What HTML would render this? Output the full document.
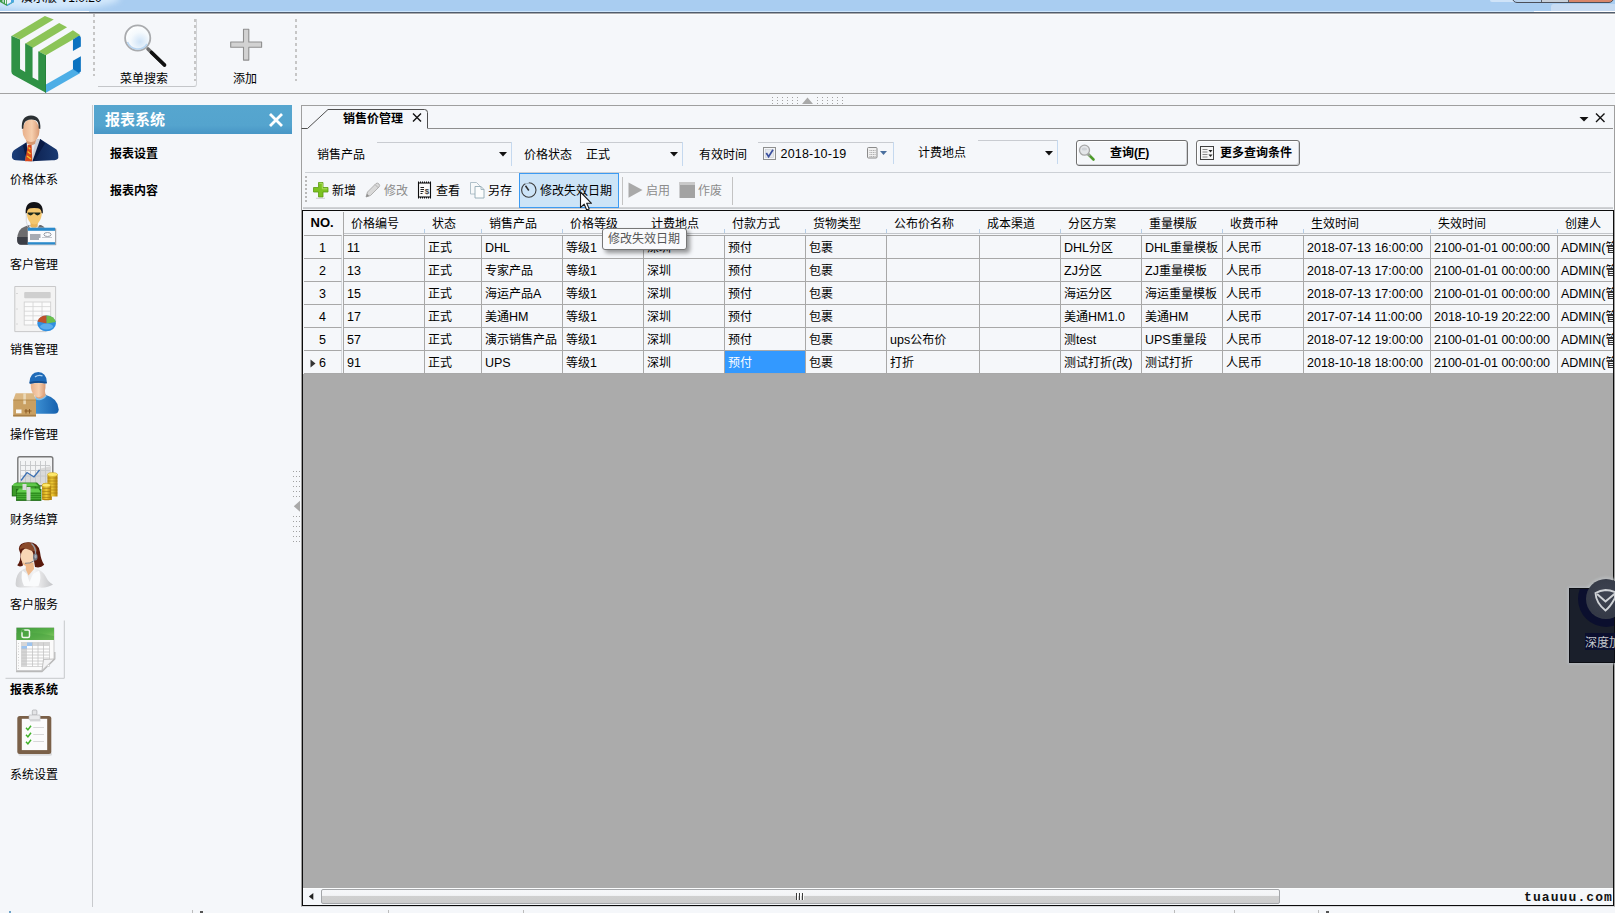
<!DOCTYPE html>
<html lang="zh-CN">
<head>
<meta charset="utf-8">
<title>销售价管理</title>
<style>
*{box-sizing:border-box;margin:0;padding:0}
html,body{width:1615px;height:913px;overflow:hidden;background:#f5f7fa}
body{position:relative;font-family:"Liberation Sans","Noto Sans CJK SC",sans-serif;font-size:12px;color:#000;line-height:16px}
.abs{position:absolute}
.t{position:absolute;white-space:nowrap;line-height:18px;height:18px}
.b{font-weight:bold}
.g{color:#8c8c8c}
/* title bar */
#title{left:0;top:0;width:1615px;height:12px;background:#a9cdf1;overflow:hidden}
#titleline{left:0;top:11px;width:1615px;height:4px;background:linear-gradient(#cde5fa 0 1px,#505d6e 1px 2px,#a9aaac 2px 3px,#fcfdfe 3px 4px)}
/* top toolbar */
#tbline{left:0;top:93px;width:1615px;height:1px;background:#a3a3a3}
.vdot{position:absolute;width:2px;background:repeating-linear-gradient(#c6c6c6 0 3px,transparent 3px 6px)}
/* sidebar */
#sbline{left:92px;top:105px;width:1px;height:802px;background:#c8cacd}
.sblab{position:absolute;left:0;width:68px;text-align:center;font-size:12px;line-height:16px;white-space:nowrap}
/* panel */
#phead{left:94px;top:105px;width:198px;height:29px;background:linear-gradient(#56a6cf,#54a4ce 70%,#4896c6)}
/* main */
#mainbox{left:301px;top:105px;width:1314px;height:802px;border:1px solid #9f9f9f;border-bottom-color:#d9dadc}
#tabline{left:428px;top:128px;width:1185px;height:1px;background:#8e8e8e}
.hl{position:absolute;height:1px}
.vl{position:absolute;width:1px}
/* grid */
#grid{left:302px;top:210px;width:1312px;height:696px;background:#ababab;border:1px solid #0c0c0c;overflow:hidden}
#gin{position:absolute;left:1px;top:1px;width:1309px;height:693px}
#ghead{position:absolute;left:0;top:0;width:1400px;height:23px;background:#f5f7fa}
#ghead:after{content:"";position:absolute;left:40px;top:21px;width:1360px;height:1px;background:#c3c6ca}
.hc{position:absolute;top:0;height:22px;line-height:24px;padding-left:8px;white-space:nowrap}
.hc i{position:absolute;right:-1px;bottom:1px;width:1px;height:4px;background:#b5cde6}
.row{position:absolute;left:0;width:1400px;height:23px;background:#f5f7fa}
.c{position:absolute;top:0;height:23px;line-height:24px;padding-left:3px;border-left:1px solid #a8a8a8;border-top:1px solid #a8a8a8;white-space:nowrap;overflow:hidden}
.n{position:absolute;top:0;left:0;width:38px;height:23px;line-height:24px;border-top:1px solid #a8a8a8;border-right:1px solid #d9dce0;text-align:center}
.l{font-size:12.5px}
</style>
</head>
<body>
<!-- TITLE BAR -->
<div id="title" class="abs">
<div class="abs" style="left:-30px;top:-14px;width:150px;height:24px;border-radius:50%;background:#d3e8fb;filter:blur(3px)"></div>
<div class="abs" style="left:1551px;top:4px;width:64px;height:7px;background:#c8dcf3;border-radius:3px 0 0 0"></div>
<div class="abs" style="left:1490px;top:-2px;width:26px;height:4px;background:#cfe3f8;border-radius:2px"></div>
<svg class="abs" style="left:-2px;top:-11px" width="18" height="18" viewBox="0 0 18 18"><path d="M2 5l7-4 7 4v8l-7 4-7-4z" fill="#3a9a47"/><path d="M9 9l7-4v8l-7 4z" fill="#4aa8e0"/><path d="M9 10.5l4-2.3v5l-4 2.3z" fill="#eef3f8"/><path d="M4.5 7v6l1.2.7V7.7zM7 8.4v6l1.2.7v-6z" fill="#eef3f8"/></svg>
<div class="t" style="left:21px;top:-10px;font-size:12px;line-height:16px;color:#000">演示版 V1.0.20</div>
<div class="abs" style="left:1512px;top:-18px;width:102px;height:21px;border:1px solid #4a4f5a;border-radius:0 0 5px 5px;background:linear-gradient(90deg,#b9d3ee 0 28px,#5b6069 28px 29px,#c8d0da 29px 55px,#5b6069 55px 56px,#d8866a 56px)"></div>
</div>
<div id="titleline" class="abs"></div>
<div class="abs" style="left:0;top:11px;width:89px;height:1px;background:#fff"></div>
<div class="abs" style="left:1534px;top:11px;width:81px;height:1px;background:#fff"></div>
<!-- TOP TOOLBAR -->
<div id="tbline" class="abs"></div>
<svg class="abs" style="left:0;top:10px" width="100" height="90" viewBox="0 0 1014 913">
<polygon points="120,262 455,62 545,97 205,300" fill="#8cc457"/>
<polygon points="258,340 600,132 680,175 330,385" fill="#8cc457"/>
<polygon points="392,420 740,205 815,255 465,460" fill="#8cc457"/>
<path d="M115,262 L203,300 L203,598 L255,628 L255,338 L330,380 L330,685 L388,715 L388,418 L465,458 L465,840 L135,660 Q115,648 115,625 Z" fill="#2f9145"/>
<polygon points="465,755 740,598 815,640 465,840" fill="#4daee6"/>
<path d="M740,300 L800,262 Q820,262 820,290 L820,370 L740,415 Z" fill="#0a72c0"/>
<path d="M740,515 L820,470 L820,625 L800,640 L740,600 Z" fill="#0a72c0"/>
<rect x="458" y="458" width="8" height="382" fill="#1f7a33"/>
</svg>
<div class="vdot" style="left:93px;top:14px;height:62px"></div>
<div class="vdot" style="left:194px;top:19px;height:62px"></div>
<div class="vdot" style="left:295px;top:19px;height:62px"></div>
<div class="abs" style="left:98px;top:19px;width:99px;height:68px;border-right:1px solid #d2d4d7;border-bottom:1px solid #c4c6c9;border-radius:0 0 3px 0"></div>
<svg class="abs" style="left:118px;top:20px" width="54" height="50" viewBox="0 0 54 50">
<defs><radialGradient id="mg" cx="0.6" cy="0.65" r="0.7"><stop offset="0" stop-color="#cfe3f7"/><stop offset="0.55" stop-color="#f4f9fd"/><stop offset="1" stop-color="#ffffff"/></radialGradient></defs>
<line x1="30" y1="29" x2="46.500" y2="45" stroke="#6d6d6d" stroke-width="3.600" stroke-linecap="round"/>
<line x1="33.500" y1="32.500" x2="46.500" y2="45" stroke="#111" stroke-width="3.600" stroke-linecap="round"/>
<circle cx="19.700" cy="18" r="12.600" fill="url(#mg)" stroke="#a9abae" stroke-width="1.800"/>
<path d="M9.500,22 A11,11 0 0 0 29,24" fill="none" stroke="#b9d6f2" stroke-width="1.600"/>
</svg>
<div class="t" style="left:104px;top:70px;width:80px;text-align:center">菜单搜索</div>
<svg class="abs" style="left:228px;top:28px" width="36" height="34" viewBox="0 0 36 34">
<path d="M15.500,2.500h5.300v12.800h12.800v5.300h-12.800v12.800h-5.300v-12.800h-12.800v-5.300h12.800z" transform="translate(0,-1.300)" fill="#d2d2d2" stroke="#8f8f8f" stroke-width="1.100" stroke-linejoin="round"/>
</svg>
<div class="t" style="left:205px;top:70px;width:80px;text-align:center">添加</div>
<!-- top splitter -->
<svg class="abs" style="left:770px;top:96px" width="80" height="9" viewBox="770 96 80 9"><g fill="#a2a2a2"><rect x="772" y="97" width="1" height="1"/><rect x="772" y="100" width="1" height="1"/><rect x="772" y="103" width="1" height="1"/><rect x="777" y="97" width="1" height="1"/><rect x="777" y="100" width="1" height="1"/><rect x="777" y="103" width="1" height="1"/><rect x="782" y="97" width="1" height="1"/><rect x="782" y="100" width="1" height="1"/><rect x="782" y="103" width="1" height="1"/><rect x="787" y="97" width="1" height="1"/><rect x="787" y="100" width="1" height="1"/><rect x="787" y="103" width="1" height="1"/><rect x="792" y="97" width="1" height="1"/><rect x="792" y="100" width="1" height="1"/><rect x="792" y="103" width="1" height="1"/><rect x="797" y="97" width="1" height="1"/><rect x="797" y="100" width="1" height="1"/><rect x="797" y="103" width="1" height="1"/><rect x="817" y="97" width="1" height="1"/><rect x="817" y="100" width="1" height="1"/><rect x="817" y="103" width="1" height="1"/><rect x="822" y="97" width="1" height="1"/><rect x="822" y="100" width="1" height="1"/><rect x="822" y="103" width="1" height="1"/><rect x="827" y="97" width="1" height="1"/><rect x="827" y="100" width="1" height="1"/><rect x="827" y="103" width="1" height="1"/><rect x="832" y="97" width="1" height="1"/><rect x="832" y="100" width="1" height="1"/><rect x="832" y="103" width="1" height="1"/><rect x="837" y="97" width="1" height="1"/><rect x="837" y="100" width="1" height="1"/><rect x="837" y="103" width="1" height="1"/><rect x="842" y="97" width="1" height="1"/><rect x="842" y="100" width="1" height="1"/><rect x="842" y="103" width="1" height="1"/></g><polygon points="807.500,97.600 813,103.900 802,103.900" fill="#a9a9a9"/></svg>
<!-- SIDEBAR -->
<div id="sbline" class="abs"></div>
<svg class="abs" style="left:0;top:105px" width="92" height="680" viewBox="0 105 92 680">
<defs>
<linearGradient id="skin" x1="0" x2="1"><stop offset="0" stop-color="#e9b08a"/><stop offset="0.55" stop-color="#f6cfae"/><stop offset="1" stop-color="#d99a74"/></linearGradient>
<linearGradient id="navy" x1="0" x2="1"><stop offset="0" stop-color="#1c3f7a"/><stop offset="0.5" stop-color="#0e2454"/><stop offset="1" stop-color="#1a3a72"/></linearGradient>
<linearGradient id="gsuit" x1="0" x2="1"><stop offset="0" stop-color="#8a8a8a"/><stop offset="1" stop-color="#5c5c5c"/></linearGradient>
<linearGradient id="bshirt" x1="0" x2="1"><stop offset="0" stop-color="#3f93d6"/><stop offset="1" stop-color="#1560ad"/></linearGradient>
<linearGradient id="boxg" x1="0" x2="1"><stop offset="0" stop-color="#cfa06a"/><stop offset="1" stop-color="#a87844"/></linearGradient>
<linearGradient id="gold" x1="0" x2="1"><stop offset="0" stop-color="#c2940c"/><stop offset="0.45" stop-color="#f0cc38"/><stop offset="1" stop-color="#b07f08"/></linearGradient>
<linearGradient id="grn" x1="0" y1="0" x2="1" y2="1"><stop offset="0" stop-color="#3f9a3c"/><stop offset="0.6" stop-color="#5bb24a"/><stop offset="1" stop-color="#8fce6a"/></linearGradient>
<linearGradient id="wshirt" x1="0" x2="1"><stop offset="0" stop-color="#cfd0d2"/><stop offset="0.5" stop-color="#f4f4f5"/><stop offset="1" stop-color="#c4c5c8"/></linearGradient>
</defs>
<!-- 1 businessman -->
<g>
<path d="M11.900,157 Q11.400,151.500 15,149.500 L26.500,142.300 L40.200,139 L56.500,149.500 Q58.600,152 58.300,158 Q57.500,160.300 52,160.300 L31,161.200 L16,160.300 Q12.200,160 11.900,157Z" fill="url(#navy)"/>
<path d="M26.500,142.300 L40.200,139 L39,146 L33,161 L25.500,161Z" fill="#e9e9ee"/>
<path d="M36,140 L40.200,139 L39.500,145 L33,161 L31,161Z" fill="#cfd0d8"/>
<path d="M40.200,139 L45,143.500 L34,161.200 L32.500,161Z" fill="#091a44"/>
<path d="M26.500,142.300 L23,146 L27,161 L28.500,161Z" fill="#091a44"/>
<path d="M27.800,145 L31.600,144.600 L32.200,161.200 L25,161.200Z" fill="#d9481c"/>
<path d="M28.600,147.500l1.800,1.800M27.600,151.500l3,2.500M27,156l4,3" stroke="#f6c52e" stroke-width="1.300"/>
<path d="M26,140 L36,140 L35,144 Q31,146.500 27,143.500Z" fill="#d89a72"/>
<ellipse cx="31" cy="130.800" rx="8.500" ry="11.300" fill="url(#skin)"/>
<path d="M21.900,129 Q20.800,115.600 31,115.500 Q41.200,115.800 40.300,129 L38.700,128.500 Q39,121.500 35.500,120.200 Q30,118.800 26.500,120.800 Q23.300,122.500 23.400,128.500Z" fill="#2b3033"/>
</g>
<!-- 2 customer mgmt -->
<g>
<path d="M17.200,240 Q17,229 25,226.500 L29,225 L41,225 Q46.800,227 46.800,236 L46.800,244.500 L21,244.500 Q17.200,244.500 17.200,240Z" fill="#6c6c6e"/>
<path d="M17.200,237 L46.800,237 L46.800,244.800 L21,244.800 Q17.200,244.500 17.200,240Z" fill="#3b3e46"/>
<path d="M28.500,225.500 L34,233 L39.500,225Z" fill="#f3f4f6"/>
<path d="M30.500,222 L38,222 L37.500,226.500 L34,230 L30.500,226.500Z" fill="#eab45a"/>
<path d="M26.700,212 Q26.700,206.500 34.300,206.500 Q41.900,206.500 41.900,212 Q41.900,218.500 38.500,222.500 Q34.300,226.500 30.100,222.500 Q26.700,218.500 26.700,212Z" fill="#f5c76e"/>
<path d="M25.700,213.500 Q24.800,202.200 34,201.900 Q43.500,202 42.800,213.500 L41.600,213 Q41.500,209 38,208.300 Q34,207.500 30.500,208.300 Q27,209 26.900,213Z" fill="#131316"/>
<path d="M27.600,212.400 h12.800 v1.200 q-1,1.800 -3,1.800 q-1.800,0 -2.800,-1.800 h-1.200 q-1,1.800 -2.800,1.800 q-2,0 -3,-1.800z" fill="#1f2a1c"/>
<path d="M26.300,214 Q25.500,222 27.800,227" stroke="#c9ccd2" stroke-width="0.700" fill="none"/>
<rect x="28.600" y="228.400" width="27.600" height="16.800" fill="#9b9da1"/>
<rect x="27.800" y="227.700" width="27.300" height="16.800" fill="#fafbfd"/>
<rect x="27.800" y="227.700" width="27.300" height="3.100" fill="#2b8acb"/>
<rect x="27.800" y="242.200" width="27.300" height="2.300" fill="#2b8acb"/>
<path d="M30,235h10.500M30,237h10.500M30,239h9" stroke="#8b919b" stroke-width="1.500"/>
<ellipse cx="47.500" cy="234.500" rx="3.600" ry="2" fill="none" stroke="#8d939d" stroke-width="0.900"/>
<path d="M42,237.500h10" stroke="#b5bac2" stroke-width="0.800"/>
</g>
<!-- 3 sales mgmt -->
<g>
<path d="M14.800,286.500 H55.600 V322 L46,331.600 H14.800Z" fill="#f3f3f3" stroke="#c4c4c4" stroke-width="0.900"/>
<rect x="24.200" y="292" width="26.500" height="6.300" rx="1" fill="#cfcfcf"/>
<rect x="24.200" y="302" width="26.500" height="23" fill="#fbfbfb" stroke="#cdcdcd" stroke-width="0.800"/>
<path d="M24.200,306.600h26.500M24.200,311.200h26.500M24.200,315.800h26.500M24.200,320.400h26.500M33,302v23M42,302v23" stroke="#d3d3d3" stroke-width="0.800"/>
<path d="M16.500,293.500h1M16.500,309h1M16.500,324h1" stroke="#bdbdbd" stroke-width="1"/>
<ellipse cx="46.600" cy="323.400" rx="9.300" ry="7.800" fill="#2f8fe0"/>
<path d="M46.600,323.400 L37.500,321.500 Q39.500,315.600 46.600,315.600Z" fill="#c0522a"/>
<path d="M46.600,323.400 L46.600,315.600 Q54,316 55.800,322Z" fill="#6cc04a"/>
<ellipse cx="46.600" cy="326.500" rx="6.500" ry="3" fill="#7cc2f4" opacity="0.600"/>
</g>
<!-- 4 operations -->
<g>
<path d="M34,413.700 L34,402 Q35,397 41,395.500 L46,395 Q58.300,398.500 58.700,409.500 Q58.700,413.700 54,413.700Z" fill="url(#bshirt)"/>
<path d="M35,399 Q40.500,402.500 46.500,396.500 L46,394 L36,394Z" fill="#7cc0ee"/>
<path d="M35.600,397 Q40.500,401 45.800,395.500 L44.800,391 L36,391Z" fill="#e2a67e"/>
<path d="M30.700,384 Q30.700,383 38,383 Q45.500,383 45.500,384 Q45.800,392 42.500,395.500 Q38.500,399 34.500,395.500 Q30.700,392 30.700,384Z" fill="url(#skin)"/>
<path d="M29.400,382.300 Q30.200,372 38.200,371.900 Q46.300,372.200 46.800,381.800 Q47,383.600 44.500,383.400 Q38,382.200 31.500,383.600 Q29.400,384 29.400,382.300Z" fill="#1f6bb8"/>
<path d="M29.600,382 Q38,380.200 46.800,382 L46.800,383.400 Q38,382 29.600,383.700Z" fill="#164d8c"/>
<path d="M35,376.800 q3.500,-2.200 7.500,-1" stroke="#a9cff0" stroke-width="1.400" fill="none"/>
<path d="M15.700,393.200 L33.500,393.200 L36,400 L13.200,400Z" fill="#dbb782"/>
<rect x="13.200" y="400" width="22.800" height="16.400" fill="#c9a062"/>
<rect x="13.200" y="414.800" width="22.800" height="1.600" fill="#a87f48"/>
<rect x="23.300" y="393.200" width="2.600" height="11" fill="#ead9b8"/>
<path d="M13.200,400h22.800" stroke="#a6803f" stroke-width="0.700"/>
<rect x="16" y="409.500" width="5.500" height="3.800" fill="#fbf8f2"/>
<path d="M26,409v4.500M29.500,409v4.500M24.500,411h7" stroke="#8a5a24" stroke-width="1"/>
</g>
<!-- 5 finance -->
<g>
<rect x="17.800" y="456.800" width="35" height="29" rx="2" fill="#f3f4f5" stroke="#777" stroke-width="1.400"/>
<path d="M21,481 L27,472.500 L32.500,477 L39,469 L51,466 L51,485 L21,485Z" fill="#d9d9d9"/>
<path d="M20.500,461v22M25.500,461v22M30.500,461v22M35.500,461v22M40.500,461v22M45.500,461v22M20,465.500h30M20,470.500h30M20,476h30" stroke="#c4c6c8" stroke-width="0.900"/>
<path d="M21,480.500 L27,472.500 L34,477 L39.500,470" stroke="#3a6fb2" stroke-width="1.300" fill="none"/>
<rect x="42.300" y="485" width="9.500" height="15" fill="url(#gold)"/>
<ellipse cx="47" cy="485" rx="4.750" ry="1.900" fill="#ffe96a" stroke="#c29a17" stroke-width="0.500"/>
<path d="M42.300,488h9.500M42.300,491h9.500M42.300,494h9.500M42.300,497h9.500" stroke="#9d7712" stroke-width="0.600"/>
<ellipse cx="46.700" cy="499" rx="4.400" ry="1.300" fill="#b8860b"/>
<rect x="47.500" y="474.500" width="10" height="22" fill="url(#gold)"/>
<ellipse cx="52.500" cy="474.500" rx="5" ry="2" fill="#ffe96a" stroke="#c29a17" stroke-width="0.500"/>
<path d="M47.500,478h10M47.500,481h10M47.500,484h10M47.500,487h10M47.500,490h10M47.500,493h10" stroke="#9d7712" stroke-width="0.600"/>
<rect x="42.300" y="485" width="8.800" height="14" fill="url(#gold)"/>
<ellipse cx="46.300" cy="485.200" rx="4.300" ry="1.800" fill="#ffe96a" stroke="#c29a17" stroke-width="0.500"/>
<path d="M42.300,488.500h8M42.300,491.500h8M42.300,494.500h8M42.300,497.500h8" stroke="#9d7712" stroke-width="0.600"/>
<path d="M12,486 L16,482.500 L37,482.500 L40.500,486 L40.500,496 L12,496Z" fill="#2f8a22"/>
<rect x="12.200" y="486" width="23" height="10" fill="#3d9a2a" stroke="#1f6a16" stroke-width="0.800"/>
<path d="M14,483.200h21.500l3,3h-26z" fill="#5fc84a"/>
<rect x="16.500" y="489.500" width="24.500" height="11" fill="#2f8f1f" stroke="#1f6a16" stroke-width="0.800"/>
<path d="M19,488.600h19.500l2.500,4h-24.500z" fill="#62cc4c"/>
<path d="M16.500,494.500h24.500M16.500,496.500h24.500M16.500,498.500h24.500" stroke="#4db33a" stroke-width="0.800"/>
<rect x="26.500" y="487" width="4" height="13.500" fill="#d9dadb"/>
<rect x="22.500" y="484" width="4" height="6" fill="#d9dadb"/>
</g>
<!-- 6 customer service -->
<g>
<path d="M15.600,584 Q15.800,573 23,569.500 L28,567 L35.500,568.500 Q43,570.500 46,577 Q48,582 53,584.500 Q48,588 40,587.600 L20,587.600 Q15.600,587.600 15.600,584Z" fill="url(#wshirt)"/>
<path d="M22.500,570.500 L27,574 L29.500,582 L33,574 L39,570.500 Q42,577 38.500,586 L24,586 Q20,578 22.500,570.500Z" fill="#fafbfc"/>
<path d="M25.500,564 L33.500,562.500 L34,569 L28.500,575.500 L26,570Z" fill="#efb98a"/>
<path d="M18.800,549 Q19,542.300 28,542.200 Q38.500,542 40,552 Q41,560.500 44.200,564.800 Q40.500,568.500 35,567 L33.500,558 L22,560 L23,565.500 Q19.500,567.500 17.200,565.300 Q21,561 20.500,554Z" fill="#5a1a0c"/>
<ellipse cx="27.200" cy="556.500" rx="6.500" ry="8.600" fill="#f8d7b6"/>
<path d="M22,561.500 Q27.500,566.500 33,561 L31.500,565 Q27.500,567 23.500,565Z" fill="#efb98a"/>
<path d="M19.300,550 Q20.500,542.600 29,542.600 Q36,543.500 37.300,551.500 Q31,551 27,549 Q23,547 19.300,550Z" fill="#8a4a2a"/>
<path d="M31.500,543.500 Q36,547 35.600,555" stroke="#9aa0aa" stroke-width="1.300" fill="none"/>
<ellipse cx="35.300" cy="557" rx="2.300" ry="3.500" fill="#70757f"/>
<ellipse cx="35.600" cy="556.500" rx="1.100" ry="2" fill="#a9aeb8"/>
<path d="M34.500,560.500 Q30,564 25,563.300" stroke="#70757f" stroke-width="0.900" fill="none"/>
</g>
<!-- 7 report (selected) -->
<g>
<path d="M64.300,620.500V678.300H5.500" fill="none" stroke="#c6c8cb" stroke-width="1"/>
<path d="M16.700,652 V671.500 H42 L54.800,659 V652" fill="none" stroke="#b9b9b9" stroke-width="1.300"/>
<path d="M16.500,627.800 H54 V659 L42,670.500 H16.500Z" fill="#fbfbfb" stroke="#c2c2c2" stroke-width="0.800"/>
<path d="M16.500,627.800 H54 V640 H16.500Z" fill="url(#grn)"/>
<path d="M16.500,633 Q35,631 54,636 V640 H16.500Z" fill="#4aa342" opacity="0.550"/>
<rect x="22" y="630" width="7.500" height="7.500" rx="1.500" fill="none" stroke="#f2f8f0" stroke-width="1.500"/>
<rect x="21.300" y="629.300" width="3" height="3" fill="#4da544"/>
<rect x="21.500" y="642.500" width="28" height="24" fill="#fdfdfd" stroke="#c7c7c7" stroke-width="0.700"/>
<rect x="21.500" y="642.500" width="5.500" height="24" fill="#d6d6d6"/>
<rect x="21.500" y="642.500" width="28" height="3.500" fill="#d6d6d6"/>
<rect x="21.500" y="646" width="5.500" height="3" fill="#9cc4f0"/>
<rect x="27" y="642.500" width="5.500" height="3.500" fill="#9cc4f0"/>
<path d="M21.500,649h28M21.500,652h28M21.500,655h28M21.500,658h28M21.500,661h28M21.500,664h28M32.500,642.500v24M38,642.500v24M43.500,642.500v24" stroke="#c4c4c4" stroke-width="0.800"/>
<path d="M54,659 L43.500,659.500 L42,670.500Z" fill="#f4f4f5" stroke="#b5b5b5" stroke-width="0.800"/>
<path d="M18.500,643v26" stroke="#b9b9b9" stroke-width="0.800" stroke-dasharray="0.800 2"/>
</g>
<!-- 8 settings clipboard -->
<g>
<rect x="18.500" y="752" width="33.500" height="3.800" rx="1.500" fill="#dcdddf"/>
<rect x="17.300" y="716" width="34" height="38" rx="2.500" fill="#7a6048"/>
<rect x="21.800" y="718.800" width="25.400" height="31.300" fill="#fbfbfc"/>
<rect x="32.300" y="710" width="4.600" height="5" rx="1" fill="#e3e4e6" stroke="#a9aaad" stroke-width="0.700"/>
<rect x="29" y="715" width="11.200" height="4.800" rx="0.800" fill="#e9eaec" stroke="#b3b4b7" stroke-width="0.600"/>
<rect x="30" y="720" width="10.500" height="1.400" fill="#d4d5d7"/>
<path d="M26,727.800l1.900,2.100 3.100,-4.200M26,734.800l1.900,2.100 3.100,-4.200M26,741.800l1.900,2.100 3.100,-4.200" stroke="#3fb228" stroke-width="1.500" fill="none"/>
<path d="M33.200,727.500h10.800M33.200,734.500h10.800M33.200,741.500h10.800" stroke="#cfcfcf" stroke-width="0.800"/>
</g>
</svg>
<div class="sblab" style="top:172px">价格体系</div>
<div class="sblab" style="top:257px">客户管理</div>
<div class="sblab" style="top:342px">销售管理</div>
<div class="sblab" style="top:427px">操作管理</div>
<div class="sblab" style="top:512px">财务结算</div>
<div class="sblab" style="top:597px">客户服务</div>
<div class="sblab b" style="top:682px">报表系统</div>
<div class="sblab" style="top:767px">系统设置</div>
<!-- PANEL -->
<div id="phead" class="abs"></div>
<div class="t b" style="left:105px;top:110px;font-size:15px;line-height:20px;height:20px;color:#fff">报表系统</div>
<svg class="abs" style="left:267px;top:112px" width="18" height="16"><path d="M3,2 L15,14 M15,2 L3,14" stroke="#fff" stroke-width="2.800"/></svg>
<div class="t b" style="left:110px;top:145px">报表设置</div>
<div class="t b" style="left:110px;top:182px">报表内容</div>
<!-- left splitter -->
<svg class="abs" style="left:292px;top:470px" width="9" height="74" viewBox="292 470 9 74"><g fill="#a2a2a2"><rect x="293" y="471" width="1" height="1"/><rect x="296" y="471" width="1" height="1"/><rect x="299" y="471" width="1" height="1"/><rect x="293" y="476" width="1" height="1"/><rect x="296" y="476" width="1" height="1"/><rect x="299" y="476" width="1" height="1"/><rect x="293" y="481" width="1" height="1"/><rect x="296" y="481" width="1" height="1"/><rect x="299" y="481" width="1" height="1"/><rect x="293" y="486" width="1" height="1"/><rect x="296" y="486" width="1" height="1"/><rect x="299" y="486" width="1" height="1"/><rect x="293" y="491" width="1" height="1"/><rect x="296" y="491" width="1" height="1"/><rect x="299" y="491" width="1" height="1"/><rect x="293" y="496" width="1" height="1"/><rect x="296" y="496" width="1" height="1"/><rect x="299" y="496" width="1" height="1"/><rect x="293" y="516" width="1" height="1"/><rect x="296" y="516" width="1" height="1"/><rect x="299" y="516" width="1" height="1"/><rect x="293" y="521" width="1" height="1"/><rect x="296" y="521" width="1" height="1"/><rect x="299" y="521" width="1" height="1"/><rect x="293" y="526" width="1" height="1"/><rect x="296" y="526" width="1" height="1"/><rect x="299" y="526" width="1" height="1"/><rect x="293" y="531" width="1" height="1"/><rect x="296" y="531" width="1" height="1"/><rect x="299" y="531" width="1" height="1"/><rect x="293" y="536" width="1" height="1"/><rect x="296" y="536" width="1" height="1"/><rect x="299" y="536" width="1" height="1"/><rect x="293" y="541" width="1" height="1"/><rect x="296" y="541" width="1" height="1"/><rect x="299" y="541" width="1" height="1"/></g><polygon points="293.800,506.300 300,500.800 300,511.800" fill="#a9a9a9"/></svg>
<!-- MAIN -->
<div id="mainbox" class="abs"></div>
<div id="tabline" class="abs"></div>
<svg class="abs" style="left:301px;top:105px" width="131" height="25" viewBox="301 105 131 25">
<path d="M301.500,128.500 H307.500 L328,109.500 H424.500 Q427.500,109.500 427.500,112.500 V128.500" fill="none" stroke="#4f4f4f" stroke-width="1"/>
<path d="M413,113.500 l8,8 M421,113.500 l-8,8" stroke="#111" stroke-width="1.400"/>
</svg>
<div class="t b" style="left:343px;top:110px">销售价管理</div>
<svg class="abs" style="left:1578px;top:112px" width="30" height="12" viewBox="1578 112 30 12">
<polygon points="1579.500,117 1588.500,117 1584,121.500" fill="#111"/>
<path d="M1596,113.500 l8.500,8.500 M1604.500,113.500 l-8.500,8.500" stroke="#111" stroke-width="1.400"/>
</svg>
<!-- filter row -->
<div class="t" style="left:317px;top:146px">销售产品</div>
<div class="hl" style="left:377px;top:142px;width:135px;background:#c9ccd1"></div>
<div class="vl" style="left:511px;top:142px;height:24px;background:#c5d9ef"></div>
<svg class="abs" style="left:498px;top:151px" width="10" height="6"><polygon points="1,1 9,1 5,5.500" fill="#111"/></svg>
<div class="t" style="left:524px;top:146px">价格状态</div>
<div class="t" style="left:586px;top:146px">正式</div>
<div class="hl" style="left:580px;top:142px;width:103px;background:#c9ccd1"></div>
<div class="vl" style="left:682px;top:142px;height:24px;background:#c5d9ef"></div>
<svg class="abs" style="left:669px;top:151px" width="10" height="6"><polygon points="1,1 9,1 5,5.500" fill="#111"/></svg>
<div class="t" style="left:699px;top:146px">有效时间</div>
<div class="hl" style="left:758px;top:142px;width:136px;background:#c9ccd1"></div>
<div class="vl" style="left:893px;top:142px;height:22px;background:#c5d9ef"></div>
<svg class="abs" style="left:763px;top:147px" width="14" height="14"><rect x="0.500" y="0.500" width="12" height="12" fill="#f4f6f9" stroke="#8e8f8f"/><rect x="2.500" y="2.500" width="8" height="8" fill="#e6e9ee" stroke="#c8ccd2" stroke-width="0.600"/><path d="M3.300,6 L5.600,9.600 L10,2.800" fill="none" stroke="#3a4f9e" stroke-width="1.700"/></svg>
<div class="t" style="left:780.500px;top:145px;font-size:12.500px;letter-spacing:.2px">2018-10-19</div>
<svg class="abs" style="left:866px;top:146px" width="22" height="14"><rect x="1.500" y="1.500" width="9.500" height="10.500" rx="1" fill="#f0f0f0" stroke="#8a8a8a"/><path d="M3.500,4.500h6M3.500,6.500h6M3.500,8.500h6M3.500,10.500h6" stroke="#a7a7a7" stroke-width="1" stroke-dasharray="1 0.700"/><polygon points="14,5 21,5 17.500,9" fill="#4a6f9e"/></svg>
<div class="t" style="left:918px;top:144px">计费地点</div>
<div class="hl" style="left:978px;top:140px;width:80px;background:#c9ccd1"></div>
<div class="vl" style="left:1057px;top:140px;height:24px;background:#c5d9ef"></div>
<svg class="abs" style="left:1044px;top:150px" width="10" height="6"><polygon points="1,1 9,1 5,5.500" fill="#111"/></svg>
<div class="abs" style="left:1076px;top:140px;width:112px;height:26px;border:1px solid #707070;border-radius:3px;background:#f5f7fa;box-shadow:inset -1px -1px 0 #d0d2d5,inset 1px 1px 0 #fff"></div>
<svg class="abs" style="left:1078px;top:144px" width="18" height="18"><line x1="10" y1="10" x2="15.500" y2="15.500" stroke="#4d9b2a" stroke-width="2.600" stroke-linecap="round"/><line x1="8.500" y1="8.500" x2="12" y2="12" stroke="#9a9a9a" stroke-width="2"/><circle cx="6.500" cy="6.200" r="5" fill="#e4e6e9" stroke="#a8a8a8" stroke-width="1.300"/><ellipse cx="6.300" cy="5" rx="2.800" ry="1.600" fill="#cfd2d6"/></svg>
<div class="t b" style="left:1110px;top:144px">查询(<u>F</u>)</div>
<div class="abs" style="left:1196px;top:140px;width:104px;height:26px;border:1px solid #707070;border-radius:3px;background:#f5f7fa;box-shadow:inset -1px -1px 0 #d0d2d5,inset 1px 1px 0 #fff"></div>
<svg class="abs" style="left:1200px;top:146px" width="14" height="14"><rect x="0.500" y="0.500" width="13" height="13" fill="#f6f6f6" stroke="#3f3f3f"/><path d="M2.500,3.500h5M2.500,6h5M2.500,8.500h5M2.500,11h5" stroke="#8a8a8a" stroke-width="1"/><polygon points="8.500,4 12.500,4 10.500,6.500" fill="#222"/><polygon points="8.500,8.500 12.500,8.500 10.500,11" fill="#222"/></svg>
<div class="t b" style="left:1220px;top:144px">更多查询条件</div>
<div class="hl" style="left:305px;top:172px;width:1306px;background:#ccd0d5"></div>
<!-- action toolbar -->
<div class="hl" style="left:303px;top:207px;width:1310px;height:2px;background:linear-gradient(#d4d6d9,#c3c6ca)"></div>
<div class="vdot" style="left:304.500px;top:176px;height:26px;width:2px;background:repeating-linear-gradient(#b9b9b9 0 2px,transparent 2px 4px)"></div>
<svg class="abs" style="left:312px;top:181px" width="18" height="18"><path d="M6.500,1.500h4.500v5h5v4.500h-5v5h-4.500v-5h-5v-4.500h5z" fill="#7cc221" stroke="#5a9a12" stroke-width="0.800"/><path d="M7.300,2.300h3v5.500h5" fill="none" stroke="#b6e36a" stroke-width="0.900"/><path d="M4,17.300h9" stroke="#c4c4c4" stroke-width="0.800"/></svg>
<div class="t" style="left:332px;top:182px">新增</div>
<svg class="abs" style="left:364px;top:181px" width="18" height="18"><path d="M2,16 L3.500,11 L12,2.500 Q13.500,1.500 15,3 Q16.300,4.500 15,6 L6.500,14.500Z" fill="#d9d9d9" stroke="#a9a9a9" stroke-width="0.900"/><path d="M11,3.500l3.500,3.500" stroke="#a9a9a9" stroke-width="0.800"/><path d="M2,16l1,-3.200 2.200,2.200z" fill="#8d8d8d"/></svg>
<div class="t g" style="left:384px;top:182px">修改</div>
<svg class="abs" style="left:417px;top:180px" width="16" height="20"><rect x="1.500" y="3" width="12" height="14" fill="#fafafa" stroke="#0d0d0d" stroke-width="1.100"/><path d="M1,2.200h13M1,17.800h13" stroke="#0d0d0d" stroke-width="1.400" stroke-dasharray="1 1"/><path d="M3.500,7.500h3.500M3.500,9.500h3.500M3.500,11.500h3M3.500,13.500h2" stroke="#222" stroke-width="1"/><text x="7.800" y="14.300" font-family="Liberation Sans,sans-serif" font-size="8" font-weight="bold" fill="#444">$</text></svg>
<div class="t" style="left:436px;top:182px">查看</div>
<svg class="abs" style="left:469px;top:181px" width="17" height="18"><path d="M1.500,1.500h6l3,3v8.500h-9z" fill="#f7f9fa" stroke="#a9bac4" stroke-width="0.900"/><path d="M6,5.500h6l3,3v8.500h-9z" fill="#fcfdfd" stroke="#93a9b4" stroke-width="0.900"/><path d="M12,5.500v3h3" fill="none" stroke="#93a9b4" stroke-width="0.800"/></svg>
<div class="t" style="left:488px;top:182px">另存</div>
<div class="abs" style="left:519px;top:173px;width:100px;height:35px;background:#cce4f7;border:1px solid #3c9bf3"></div>
<svg class="abs" style="left:520px;top:181px" width="18" height="18"><circle cx="8.800" cy="9" r="7.200" fill="none" stroke="#3b3b3b" stroke-width="1.100"/><path d="M5,1.800 A8,8 0 0 1 8.800,1" stroke="#cce4f7" stroke-width="2.500" fill="none"/><path d="M8.800,9.500 L5.500,4.800" stroke="#2d2d2d" stroke-width="1.500"/></svg>
<div class="t" style="left:540px;top:182px">修改失效日期</div>
<div class="vl" style="left:622px;top:177px;height:28px;background:#c3c3c3"></div>
<svg class="abs" style="left:627px;top:181px" width="17" height="18"><polygon points="1.500,1.500 15.500,9 1.500,16.800" fill="#a9a9a9"/></svg>
<div class="t g" style="left:646px;top:182px">启用</div>
<svg class="abs" style="left:679px;top:181px" width="17" height="18"><rect x="0.500" y="1" width="15.500" height="16" fill="#a3a3a3"/><rect x="0.500" y="1" width="15.500" height="3" fill="#c9c9c9"/></svg>
<div class="t g" style="left:698px;top:182px">作废</div>
<div class="vl" style="left:732px;top:177px;height:28px;background:#c3c3c3"></div>

<!-- GRID -->
<div id="grid" class="abs"><div id="gin">
<div class="abs" style="left:-1px;top:-1px;width:1400px;height:163px;background:#f5f7fa"></div>
<div id="ghead">
<div class="hc b" style="left:0;width:40px;padding-left:6.500px;font-size:13px;height:23px;line-height:22px;border-right:1px solid #a8a8a8">NO.</div>
<div class="hc" style="left:39px;width:81px">价格编号<i></i></div>
<div class="hc" style="left:120px;width:57px">状态<i></i></div>
<div class="hc" style="left:177px;width:81px">销售产品<i></i></div>
<div class="hc" style="left:258px;width:81px">价格等级<i></i></div>
<div class="hc" style="left:339px;width:81px">计费地点<i></i></div>
<div class="hc" style="left:420px;width:81px">付款方式<i></i></div>
<div class="hc" style="left:501px;width:81px">货物类型<i></i></div>
<div class="hc" style="left:582px;width:93px">公布价名称<i></i></div>
<div class="hc" style="left:675px;width:81px">成本渠道<i></i></div>
<div class="hc" style="left:756px;width:81px">分区方案<i></i></div>
<div class="hc" style="left:837px;width:81px">重量模版<i></i></div>
<div class="hc" style="left:918px;width:81px">收费币种<i></i></div>
<div class="hc" style="left:999px;width:127px">生效时间<i></i></div>
<div class="hc" style="left:1126px;width:127px">失效时间<i></i></div>
<div class="hc" style="left:1253px;width:127px">创建人<i></i></div>
</div>
<div class="row" style="top:23px">
<div class="n"><span class="l">1</span></div>
<div class="c" style="left:39px;width:81px"><span class="l">11</span></div>
<div class="c" style="left:120px;width:57px">正式</div>
<div class="c" style="left:177px;width:81px"><span class="l">DHL</span></div>
<div class="c" style="left:258px;width:81px">等级<span class="l">1</span></div>
<div class="c" style="left:339px;width:81px">深圳</div>
<div class="c" style="left:420px;width:81px">预付</div>
<div class="c" style="left:501px;width:81px">包裹</div>
<div class="c" style="left:582px;width:93px"></div>
<div class="c" style="left:675px;width:81px"></div>
<div class="c" style="left:756px;width:81px"><span class="l">DHL</span>分区</div>
<div class="c" style="left:837px;width:81px"><span class="l">DHL</span>重量模板</div>
<div class="c" style="left:918px;width:81px">人民币</div>
<div class="c" style="left:999px;width:127px"><span class="l">2018-07-13 16:00:00</span></div>
<div class="c" style="left:1126px;width:127px"><span class="l">2100-01-01 00:00:00</span></div>
<div class="c" style="left:1253px;width:127px"><span class="l">ADMIN(</span>管理员<span class="l">)</span></div>
</div>
<div class="row" style="top:46px">
<div class="n"><span class="l">2</span></div>
<div class="c" style="left:39px;width:81px"><span class="l">13</span></div>
<div class="c" style="left:120px;width:57px">正式</div>
<div class="c" style="left:177px;width:81px">专家产品</div>
<div class="c" style="left:258px;width:81px">等级<span class="l">1</span></div>
<div class="c" style="left:339px;width:81px">深圳</div>
<div class="c" style="left:420px;width:81px">预付</div>
<div class="c" style="left:501px;width:81px">包裹</div>
<div class="c" style="left:582px;width:93px"></div>
<div class="c" style="left:675px;width:81px"></div>
<div class="c" style="left:756px;width:81px"><span class="l">ZJ</span>分区</div>
<div class="c" style="left:837px;width:81px"><span class="l">ZJ</span>重量模板</div>
<div class="c" style="left:918px;width:81px">人民币</div>
<div class="c" style="left:999px;width:127px"><span class="l">2018-07-13 17:00:00</span></div>
<div class="c" style="left:1126px;width:127px"><span class="l">2100-01-01 00:00:00</span></div>
<div class="c" style="left:1253px;width:127px"><span class="l">ADMIN(</span>管理员<span class="l">)</span></div>
</div>
<div class="row" style="top:69px">
<div class="n"><span class="l">3</span></div>
<div class="c" style="left:39px;width:81px"><span class="l">15</span></div>
<div class="c" style="left:120px;width:57px">正式</div>
<div class="c" style="left:177px;width:81px">海运产品<span class="l">A</span></div>
<div class="c" style="left:258px;width:81px">等级<span class="l">1</span></div>
<div class="c" style="left:339px;width:81px">深圳</div>
<div class="c" style="left:420px;width:81px">预付</div>
<div class="c" style="left:501px;width:81px">包裹</div>
<div class="c" style="left:582px;width:93px"></div>
<div class="c" style="left:675px;width:81px"></div>
<div class="c" style="left:756px;width:81px">海运分区</div>
<div class="c" style="left:837px;width:81px">海运重量模板</div>
<div class="c" style="left:918px;width:81px">人民币</div>
<div class="c" style="left:999px;width:127px"><span class="l">2018-07-13 17:00:00</span></div>
<div class="c" style="left:1126px;width:127px"><span class="l">2100-01-01 00:00:00</span></div>
<div class="c" style="left:1253px;width:127px"><span class="l">ADMIN(</span>管理员<span class="l">)</span></div>
</div>
<div class="row" style="top:92px">
<div class="n"><span class="l">4</span></div>
<div class="c" style="left:39px;width:81px"><span class="l">17</span></div>
<div class="c" style="left:120px;width:57px">正式</div>
<div class="c" style="left:177px;width:81px">美通<span class="l">HM</span></div>
<div class="c" style="left:258px;width:81px">等级<span class="l">1</span></div>
<div class="c" style="left:339px;width:81px">深圳</div>
<div class="c" style="left:420px;width:81px">预付</div>
<div class="c" style="left:501px;width:81px">包裹</div>
<div class="c" style="left:582px;width:93px"></div>
<div class="c" style="left:675px;width:81px"></div>
<div class="c" style="left:756px;width:81px">美通<span class="l">HM1.0</span></div>
<div class="c" style="left:837px;width:81px">美通<span class="l">HM</span></div>
<div class="c" style="left:918px;width:81px">人民币</div>
<div class="c" style="left:999px;width:127px"><span class="l">2017-07-14 11:00:00</span></div>
<div class="c" style="left:1126px;width:127px"><span class="l">2018-10-19 20:22:00</span></div>
<div class="c" style="left:1253px;width:127px"><span class="l">ADMIN(</span>管理员<span class="l">)</span></div>
</div>
<div class="row" style="top:115px">
<div class="n"><span class="l">5</span></div>
<div class="c" style="left:39px;width:81px"><span class="l">57</span></div>
<div class="c" style="left:120px;width:57px">正式</div>
<div class="c" style="left:177px;width:81px">演示销售产品</div>
<div class="c" style="left:258px;width:81px">等级<span class="l">1</span></div>
<div class="c" style="left:339px;width:81px">深圳</div>
<div class="c" style="left:420px;width:81px">预付</div>
<div class="c" style="left:501px;width:81px">包裹</div>
<div class="c" style="left:582px;width:93px"><span class="l">ups</span>公布价</div>
<div class="c" style="left:675px;width:81px"></div>
<div class="c" style="left:756px;width:81px">测<span class="l">test</span></div>
<div class="c" style="left:837px;width:81px"><span class="l">UPS</span>重量段</div>
<div class="c" style="left:918px;width:81px">人民币</div>
<div class="c" style="left:999px;width:127px"><span class="l">2018-07-12 19:00:00</span></div>
<div class="c" style="left:1126px;width:127px"><span class="l">2100-01-01 00:00:00</span></div>
<div class="c" style="left:1253px;width:127px"><span class="l">ADMIN(</span>管理员<span class="l">)</span></div>
</div>
<div class="row" style="top:138px">
<div class="n"><svg style="position:absolute;left:6px;top:8px" width="6" height="9"><polygon points="0.500,0.500 5.500,4.500 0.500,8.500" fill="#333"/></svg><span class="l">6</span></div>
<div class="c" style="left:39px;width:81px"><span class="l">91</span></div>
<div class="c" style="left:120px;width:57px">正式</div>
<div class="c" style="left:177px;width:81px"><span class="l">UPS</span></div>
<div class="c" style="left:258px;width:81px">等级<span class="l">1</span></div>
<div class="c" style="left:339px;width:81px">深圳</div>
<div class="c" style="left:420px;width:81px;background:#3399ff;color:#fff">预付</div>
<div class="c" style="left:501px;width:81px">包裹</div>
<div class="c" style="left:582px;width:93px">打折</div>
<div class="c" style="left:675px;width:81px"></div>
<div class="c" style="left:756px;width:81px">测试打折<span class="l">(</span>改<span class="l">)</span></div>
<div class="c" style="left:837px;width:81px">测试打折</div>
<div class="c" style="left:918px;width:81px">人民币</div>
<div class="c" style="left:999px;width:127px"><span class="l">2018-10-18 18:00:00</span></div>
<div class="c" style="left:1126px;width:127px"><span class="l">2100-01-01 00:00:00</span></div>
<div class="c" style="left:1253px;width:127px"><span class="l">ADMIN(</span>管理员<span class="l">)</span></div>
</div>
<div class="abs" style="left:0;top:161px;width:1400px;height:1px;background:#a8a8a8"></div>
<div class="abs" style="left:-1px;top:676px;width:1312px;height:17px;background:#f5f7fa;border-top:1px solid #fbfcfd"></div>
<svg class="abs" style="left:4px;top:680px" width="7" height="9"><polygon points="5.300,1 5.300,8 0.900,4.500" fill="#222"/></svg>
<div class="abs" style="left:17px;top:677px;width:959px;height:15px;border:1px solid #a4a6a9;border-radius:2px;background:linear-gradient(#f6f7f9 0,#f3f4f6 42%,#d0d0d0 46%,#cdcdcd 100%)"></div>
<div class="abs" style="left:492px;top:681px;width:9px;height:7px;background:repeating-linear-gradient(90deg,#3c3c3c 0 1px,#fdfdfd 1px 2px,transparent 2px 3px)"></div>
<div class="t b" style="left:1220px;top:676.500px;font-family:'Liberation Mono',monospace;font-size:13px;letter-spacing:1.1px;color:#111">tuauuu.com</div>
</div></div>
<!-- OVERLAYS -->
<div class="abs" style="left:602px;top:228px;width:85px;height:22px;border:1px solid #767676;border-radius:3px;background:#f9fafc;box-shadow:3px 3px 4px rgba(0,0,0,.4)"></div>
<div class="t" style="left:608px;top:230px;color:#575757">修改失效日期</div>
<svg class="abs" style="left:578px;top:190px" width="16" height="22" viewBox="0 0 16 22"><path d="M2.500,2 L2.500,17.500 L6.200,14.200 L8.700,20 L11.200,18.900 L8.700,13.300 L13.500,13.300 Z" fill="#fff" stroke="#1a1a1a" stroke-width="1.100" stroke-linejoin="round"/></svg>
<!-- security widget -->
<div class="abs" style="left:1586px;top:579px;width:40px;height:40px;border-radius:50%;box-shadow:0 0 3px 2px rgba(186,190,192,.9)"></div>
<div class="abs" style="left:1569px;top:588px;width:46px;height:75px;background:#1a1f2b;border:1px solid #0c0e14;box-shadow:0 0 3px 1px rgba(184,190,196,.9);overflow:hidden">
<div class="abs" style="left:8px;top:-18px;width:56px;height:56px;border-radius:50%;background:#0b0f2e"></div>
</div>
<div class="abs" style="left:1586px;top:579px;width:40px;height:40px;border-radius:50%;background:radial-gradient(circle at 50% 40%,#3f4452,#343946 70%,#444955)"></div>
<svg class="abs" style="left:1590px;top:586px" width="25" height="28" viewBox="0 0 25 28"><path d="M15.500,4 Q10,4.500 5.500,7 Q6,17 15.500,24.500 Q20,21 25,12 L25,6 Q20,4.200 15.500,4Z" fill="none" stroke="#cfd2d6" stroke-width="1.900"/><path d="M7,8 L15.500,15.500 L25,7.500" fill="none" stroke="#cfd2d6" stroke-width="2"/></svg>
<div class="abs" style="left:1585px;top:633px;width:30px;height:17px;background:#0b0f2e"></div>
<div class="t" style="left:1585px;top:633.500px;color:#c4c7cc;font-size:12px">深度加速</div>
<!-- status bar ticks -->
<div class="vl" style="left:192px;top:910px;height:3px;background:#bcbcbc"></div>
<div class="vl" style="left:388px;top:910px;height:3px;background:#bcbcbc"></div>
<div class="vl" style="left:523px;top:910px;height:3px;background:#bcbcbc"></div>
<div class="vl" style="left:1174px;top:910px;height:3px;background:#bcbcbc"></div>
<div class="vl" style="left:1234px;top:910px;height:3px;background:#bcbcbc"></div>
<div class="vl" style="left:1318px;top:910px;height:3px;background:#bcbcbc"></div>
<div class="abs" style="left:9px;top:911px;width:2px;height:2px;background:#6fa3c8"></div>
<div class="abs" style="left:200px;top:911px;width:3px;height:2px;background:#555"></div>
<div class="abs" style="left:1326px;top:911px;width:3px;height:2px;background:#555"></div>
</body>
</html>
